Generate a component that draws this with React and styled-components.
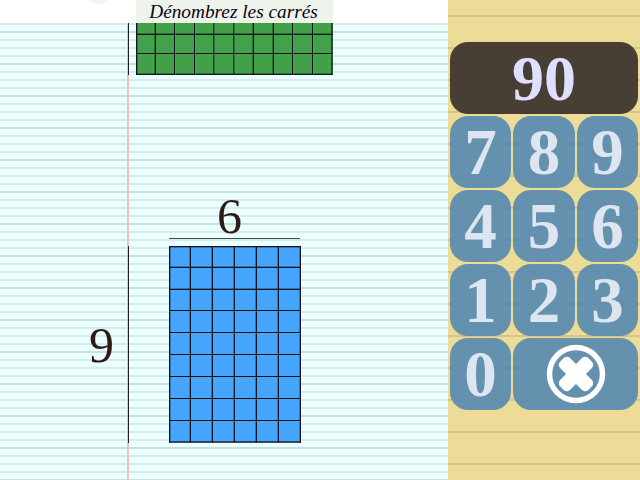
import React from "react";
import styled, { createGlobalStyle } from "styled-components";

const Global = createGlobalStyle`
  html, body { margin: 0; padding: 0; background: #fff; overflow: hidden; }
  * { box-sizing: border-box; }
`;

const Screen = styled.div`
  display: flex;
  width: 640px;
  height: 480px;
  overflow: hidden;
  font-family: "Liberation Serif", serif;
`;

const Paper = styled.main`
  width: 448px;
  height: 480px;
  display: flex;
  flex-direction: column;
  background-color: #ecffff;
  background-image:
    linear-gradient(#f2bfc0, #f2bfc0),
    repeating-linear-gradient(to bottom, #c9dedc 0 1px, transparent 1px 31px, #c9dedc 31px 32px),
    repeating-linear-gradient(to bottom, #d6edef 0 1px, transparent 1px 7px, #d6edef 7px 8px);
  background-size: 2px 100%, auto, auto;
  background-position: 127px 0, 0 0, 0 0;
  background-repeat: no-repeat, repeat, repeat;
`;

const TopBand = styled.header`
  position: relative;
  height: 23px;
  flex: none;
  padding-left: 136px;
  background: rgba(255, 255, 255, 0.96);
  overflow: hidden;

  &::before {
    content: "";
    position: absolute;
    left: 86px;
    top: -20px;
    width: 24px;
    height: 24px;
    border-radius: 50%;
    background: #f1f6f2;
  }
`;

const Title = styled.h1`
  width: 197px;
  height: 23px;
  margin: 0;
  padding-right: 2px;
  background: #eef4eb;
  color: #05050f;
  font-size: 19.3px;
  font-weight: 400;
  font-style: italic;
  line-height: 24px;
  text-align: center;
`;

const GreenExercise = styled.section`
  flex: none;
  height: 52px;
  margin-left: 128px;
  padding-left: 7px;
  border-left: 1px solid #2a1f1f;
`;

const GridFrame = styled.div`
  flex: none;
  width: ${(p) => p.$width}px;
  height: ${(p) => p.$height}px;
  margin-left: ${(p) => p.$offset || 0}px;
`;

/* The squares are drawn at 3/2 size and scaled down, which gives the soft 1.3px lines of the original. */
const SquareGrid = styled.div`
  display: grid;
  width: ${(p) => p.$width * 1.5}px;
  height: ${(p) => p.$height * 1.5}px;
  grid-template-columns: repeat(${(p) => p.$cols}, 1fr);
  grid-template-rows: ${(p) => p.$rows};
  opacity: 0.95;
  transform: scale(0.66667);
  transform-origin: 0 0;
`;

const Square = styled.div`
  background: ${(p) => p.$color};
  border-right: 2px solid #070a10;
  border-bottom: 2px solid #070a10;
  ${(p) => p.$first && "border-left: 2px solid #070a10;"}
  ${(p) => p.$top && "border-top: 2px solid #070a10;"}
`;

const ColumnLabel = styled.div`
  flex: none;
  width: 131px;
  height: 40px;
  margin: 124px 0 7px 169px;
  padding-right: 10px;
  border-bottom: 1px solid #4a4a4a;
  color: #2e1c14;
  font-size: 50px;
  line-height: 34px;
  text-align: center;
`;

const BlueRow = styled.section`
  display: flex;
  flex: none;
`;

const RowLabel = styled.div`
  display: flex;
  align-items: center;
  justify-content: flex-end;
  width: 129px;
  height: 197px;
  padding-right: 14px;
  border-right: 1px solid #2a1f1f;
  color: #2e1c14;
  font-size: 50px;
  line-height: 1;
`;

const Side = styled.aside`
  width: 192px;
  height: 480px;
  flex: none;
  padding: 42px 2px 0;
  background-color: #eddb98;
  background-image: repeating-linear-gradient(
    to bottom,
    transparent 0 15px,
    #d5c388 15px 17px,
    transparent 17px 32px
  );
`;

const Display = styled.output`
  display: block;
  height: 72px;
  margin-bottom: 2px;
  border-radius: 18px;
  background: rgba(56, 50, 43, 0.92);
  color: #dfe0ff;
  font-size: 64px;
  font-weight: 700;
  line-height: 74px;
  text-align: center;
`;

const Keys = styled.div`
  display: grid;
  grid-template-columns: 61px 62px 61px;
  grid-auto-rows: 72px;
  column-gap: 2px;
  row-gap: 2px;
`;

const Key = styled.button`
  display: flex;
  align-items: center;
  justify-content: center;
  grid-column: ${(p) => (p.$wide ? "span 2" : "auto")};
  padding: 0;
  border: 0;
  border-radius: 18px;
  background: rgba(88, 139, 175, 0.92);
  color: #dce5f0;
  font-family: inherit;
  font-size: 65px;
  font-weight: 700;
  line-height: 1;
`;

const CloseIcon = () => (
  <svg width="60" height="60" viewBox="0 0 60 60" aria-hidden="true">
    <circle cx="30" cy="30" r="26.5" fill="none" stroke="#fff" strokeWidth="5.4" />
    <g fill="#fff" transform="rotate(45 30 30)">
      <rect x="23" y="10" width="14" height="40" rx="4.5" />
      <rect x="10" y="23" width="40" height="14" rx="4.5" />
    </g>
  </svg>
);

const grid = (cols, rows) => Array.from({ length: cols * rows }, (_, i) => i);

export default function App() {
  return (
    <Screen>
      <Global />
      <Paper>
        <TopBand>
          <Title>Dénombrez les carrés</Title>
        </TopBand>
        <GreenExercise>
          <GridFrame $width={197} $height={52}>
            <SquareGrid $width={197} $height={52} $cols={10} $rows="18px 29.25px 30.75px">
              {grid(10, 3).map((i) => (
                <Square key={i} $color="#3b9c41" $first={i % 10 === 0} />
              ))}
            </SquareGrid>
          </GridFrame>
        </GreenExercise>
        <ColumnLabel>6</ColumnLabel>
        <BlueRow>
          <RowLabel>9</RowLabel>
          <GridFrame $width={132} $height={197} $offset={40}>
            <SquareGrid $width={132} $height={197} $cols={6} $rows="repeat(9, 1fr)">
              {grid(6, 9).map((i) => (
                <Square key={i} $color="#3ea2ff" $first={i % 6 === 0} $top={i < 6} />
              ))}
            </SquareGrid>
          </GridFrame>
        </BlueRow>
      </Paper>
      <Side>
        <Display>90</Display>
        <Keys>
          {[7, 8, 9, 4, 5, 6, 1, 2, 3, 0].map((n) => (
            <Key key={n}>{n}</Key>
          ))}
          <Key $wide aria-label="effacer">
            <CloseIcon />
          </Key>
        </Keys>
      </Side>
    </Screen>
  );
}
